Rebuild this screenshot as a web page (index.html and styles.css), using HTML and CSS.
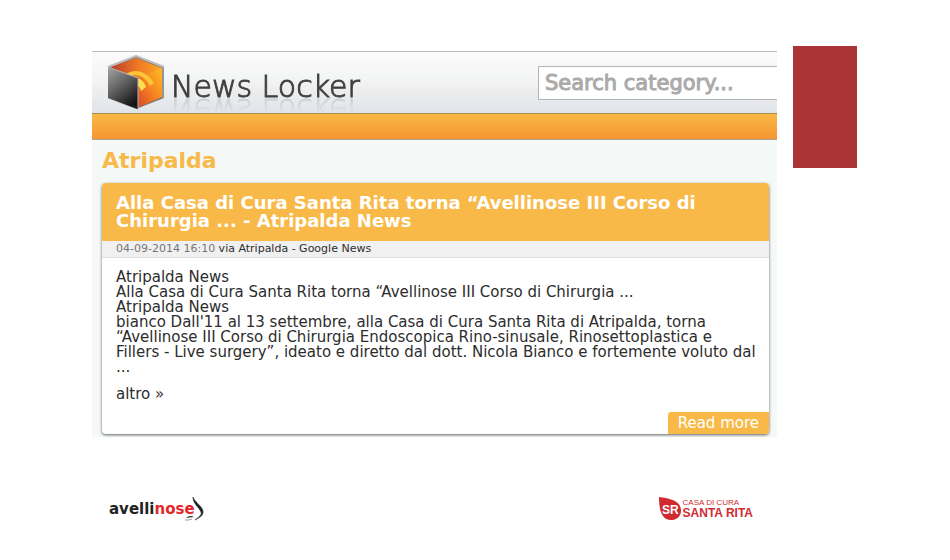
FILE: index.html
```html
<!DOCTYPE html>
<html lang="it">
<head>
    <meta charset="UTF-8">
    <meta name="viewport" content="width=device-width, initial-scale=1.0">
    <title>News Locker - Atripalda</title>
    <link rel="stylesheet" href="styles.css">
</head>
<body>
    <div class="slide">
        <main class="page">
            <header class="header">
                <a class="brand" href="#">
                    <svg class="cube" viewBox="0 0 58 56" aria-hidden="true">
                        <defs>
                            <linearGradient id="top" x1="0" y1="0" x2="1" y2="0">
                                <stop offset="0" stop-color="#b93a2c"/>
                                <stop offset="0.55" stop-color="#ef7a24"/>
                                <stop offset="1" stop-color="#fba826"/>
                            </linearGradient>
                            <linearGradient id="front" x1="0" y1="1" x2="1" y2="0">
                                <stop offset="0" stop-color="#d9442c"/>
                                <stop offset="0.5" stop-color="#f58220"/>
                                <stop offset="1" stop-color="#ffbe28"/>
                            </linearGradient>
                            <linearGradient id="side" x1="0" y1="0" x2="0.6" y2="1">
                                <stop offset="0" stop-color="#a5a5a5"/>
                                <stop offset="0.5" stop-color="#626262"/>
                                <stop offset="1" stop-color="#161616"/>
                            </linearGradient>
                        </defs>
                        <path d="M1 12 29 1l28 11v31L29 54 1 43z" fill="#777"/>
                        <path d="M3 12 29 3l26 10-24 14z" fill="url(#top)"/>
                        <path d="M31 23 55 13v29L30 53z" fill="url(#front)"/>
                        <path d="M19 19c9-6 21-3 28 9l-4 3c-5-10-13-13-21-9z" fill="#fcc535"/>
                        <path d="M28 24c5-2 9 2 11 8l-5 4c-1-4-2-5-6-6z" fill="#ffdf52"/>
                        <path d="M1 12 31 23v31L1 43z" fill="url(#side)"/>
                        <path d="M1 12 29 1l28 11" fill="none" stroke="#bdbdbd" stroke-width="2"/>
                        <path d="M1 12 31 23v30M56 12v31" fill="none" stroke="#b5b5b5" stroke-width="1"/>
                    </svg>
                    <span class="brand-name">News Locker</span>
                </a>
                <input class="search" type="text" placeholder="Search category..." aria-label="Search category">
            </header>
            <div class="bar"></div>
            <section class="content">
                <h1>Atripalda</h1>
                <article class="card">
                    <h2>Alla Casa di Cura Santa Rita torna “Avellinose III Corso di Chirurgia ... - Atripalda News</h2>
                    <p class="meta"><time>04-09-2014 16:10</time> via Atripalda - Google News</p>
                    <div class="text">
                        <p>Atripalda News<br>
                        Alla Casa di Cura Santa Rita torna “Avellinose III Corso di Chirurgia ...<br>
                        Atripalda News<br>
                        bianco Dall'11 al 13 settembre, alla Casa di Cura Santa Rita di Atripalda, torna “Avellinose III Corso di Chirurgia Endoscopica Rino-sinusale, Rinosettoplastica e<br>
                        Fillers - Live surgery”, ideato e diretto dal dott. Nicola Bianco e fortemente voluto dal<br>
                        ...</p>
                        <p>altro »</p>
                    </div>
                    <a class="more" href="#">Read more</a>
                </article>
            </section>
        </main>
        <div class="accent"></div>
        <footer class="logos">
            <div class="avellinose">
                <span>avelli<b>nose</b></span>
                <svg class="nose" viewBox="0 0 20 28" aria-hidden="true">
                    <path d="M9 2c2 6 11 10 10 16-1 4-5 5-8 7 4-3 7-5 6-8C15 12 9 9 9 2z" fill="#222" stroke="#222" stroke-width="0.6"/>
                    <path d="M2 23c2-2 5-3 8-1-3 0-5 1-8 1z" fill="#333"/>
                    <path d="M1 25c3 0 5 0 7-1" fill="none" stroke="#999" stroke-width="1"/>
                </svg>
            </div>
            <div class="santarita">
                <svg class="leaf" viewBox="0 0 22 24" aria-hidden="true">
                    <path d="M0 0c9 1 18 3 21 9 3 7-1 14-9 14C3 23 0 14 0 0z" fill="#cf2b31"/>
                    <text x="3" y="17" class="leaf-text">SR</text>
                </svg>
                <div class="santarita-name">
                    <span>CASA DI CURA</span>
                    <strong>SANTA RITA</strong>
                </div>
            </div>
        </footer>
    </div>
</body>
</html>
```
FILE: styles.css
```css
* {
    box-sizing: border-box;
}
body {
    margin: 0;
    background: #fff;
    font-family: "DejaVu Sans", Verdana, sans-serif;
    color: #2d2d2d;
}
h1, h2, p {
    margin: 0;
}
a {
    text-decoration: none;
}
.slide {
    display: grid;
    grid-template-columns: 1fr 64px;
    column-gap: 16px;
    padding: 46px 93px 32px 92px;
}
.page {
    margin-top: 5px;
    min-width: 0;
}
.accent {
    height: 122px;
    background: #aa3335;
}

/* header */
.header {
    display: flex;
    justify-content: space-between;
    align-items: center;
    height: 62px;
    padding-left: 15px;
    border-top: 1px solid #bdbdbd;
    background: linear-gradient(#fdfafa, #f3f5f5 45%, #eeeeee 60%, #e0e5ea);
}
.brand {
    display: flex;
    align-items: center;
    gap: 6px;
}
.cube {
    width: 58px;
    height: 56px;
}
.brand-name {
    padding-top: 8px;
    font-size: 30px;
    font-weight: 200;
    line-height: 30px;
    color: #333;
    -webkit-text-stroke: 1px #444;
    -webkit-box-reflect: below -8px linear-gradient(transparent 50%, rgba(0, 0, 0, 0.2));
}
.search {
    width: 239px;
    height: 34px;
    padding: 0 6px;
    border: 1px solid #b5b5b5;
    border-right: 0;
    background: #fff;
    font-family: inherit;
    font-size: 21px;
}
.search::placeholder {
    color: #aaa;
    -webkit-text-stroke: 1px #aaa;
}
.bar {
    height: 27px;
    border-top: 1px solid #a68a4c;
    border-bottom: 1px solid #a9a49c;
    background: linear-gradient(#f8b947, #f69532);
}

/* article */
.content {
    padding: 8px 8px 3px 10px;
    background: #f4f8f7;
}
h1 {
    margin-bottom: 10px;
    font-size: 22px;
    line-height: 25px;
    color: #f9b948;
}
.card {
    display: flex;
    flex-direction: column;
    overflow: hidden;
    border-radius: 4px;
    background: #fff;
    box-shadow: 0 1px 3px rgba(0, 0, 0, 0.6);
}
h2 {
    padding: 11px 14px;
    background: #f9b948;
    font-size: 18px;
    line-height: 18px;
    color: #fff;
}
.meta {
    padding: 0 14px;
    border-bottom: 1px solid #ddd;
    background: #f0f0f0;
    font-size: 11px;
    line-height: 16px;
}
.meta time {
    color: #777;
}
.text {
    padding: 12px 8px 10px 14px;
    font-size: 15px;
    line-height: 15px;
}
.text p + p {
    margin-top: 12px;
}
.more {
    align-self: flex-end;
    padding: 0 10px;
    border-top-left-radius: 3px;
    background: #f9b948;
    font-size: 15px;
    line-height: 22px;
    color: #fff;
}

/* sponsor logos */
.logos {
    display: flex;
    justify-content: space-between;
    margin-top: 58px;
    padding: 0 24px 0 17px;
}
.avellinose {
    display: flex;
    align-items: center;
    font-size: 15px;
    font-weight: bold;
    color: #222;
}
.avellinose b {
    color: #e52629;
}
.nose {
    width: 20px;
    height: 28px;
    margin-left: -11px;
}
.santarita {
    display: flex;
    align-items: center;
    gap: 2px;
    font-family: "Liberation Sans", Arial, sans-serif;
    color: #cf2b31;
}
.leaf {
    width: 22px;
    height: 24px;
}
.leaf-text {
    font-size: 12px;
    font-weight: bold;
    fill: #fff;
}
.santarita-name {
    display: flex;
    flex-direction: column;
    font-size: 8px;
    line-height: 8px;
}
.santarita-name strong {
    font-size: 12px;
    line-height: 12px;
}
```
